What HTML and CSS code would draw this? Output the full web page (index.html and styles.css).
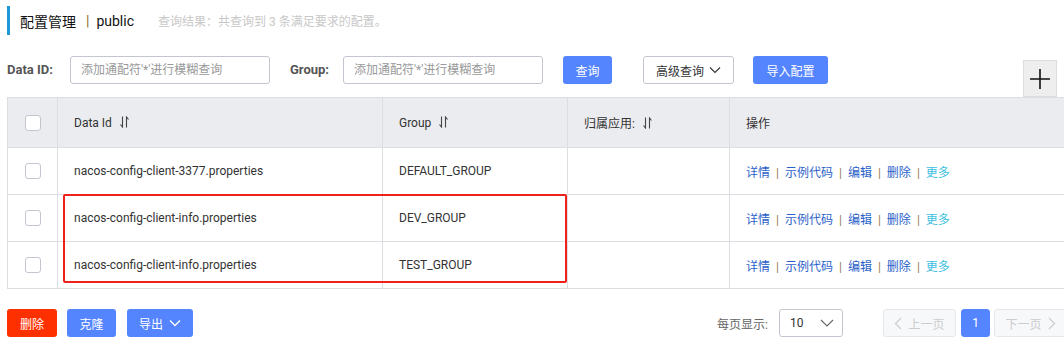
FILE: index.html
```html
<!DOCTYPE html>
<html lang="zh-CN">
<head>
    <meta charset="UTF-8">
    <title>配置管理 - public</title>
    <link rel="stylesheet" href="styles.css">
</head>
<body>
    <div class="page">
        <div class="title-bar">
            <span class="title">配置管理</span>
            <span class="title-sep">|</span>
            <span class="title-ns">public</span>
            <span class="query-result">查询结果：共查询到 3 条满足要求的配置。</span>
        </div>

        <div class="filter-row">
            <label class="filter-label data-label">Data ID:</label>
            <input class="filter-input" type="text" placeholder="添加通配符'*'进行模糊查询">
            <label class="filter-label group-label">Group:</label>
            <input class="filter-input" type="text" placeholder="添加通配符'*'进行模糊查询">
            <button class="btn btn-primary btn-search">查询</button>
            <button class="btn btn-normal btn-advanced">高级查询
                <svg class="chevron" width="12" height="8" viewBox="0 0 12 8"><path d="M1 1.5 L6 6.5 L11 1.5" fill="none" stroke="#333" stroke-width="1.1"/></svg>
            </button>
            <button class="btn btn-primary btn-import">导入配置</button>
            <div class="add-box">
                <svg width="20" height="20" viewBox="0 0 20 20"><path d="M10 0 V20 M0 10 H20" stroke="#111" stroke-width="1.6"/></svg>
            </div>
        </div>

        <div class="table-wrap">
            <table class="config-table">
                <colgroup>
                    <col style="width: 50px">
                    <col style="width: 325px">
                    <col style="width: 185px">
                    <col style="width: 162px">
                    <col>
                </colgroup>
                <thead>
                    <tr>
                        <th class="check-cell"><span class="checkbox"></span></th>
                        <th>Data Id <svg class="sort" width="9" height="12" viewBox="0 0 9 12"><path d="M2.5 0.5 V11 L0.5 8.5 M6.5 11.5 V1 L8.5 3.5" fill="none" stroke="#444" stroke-width="1.1"/></svg></th>
                        <th>Group <svg class="sort" width="9" height="12" viewBox="0 0 9 12"><path d="M2.5 0.5 V11 L0.5 8.5 M6.5 11.5 V1 L8.5 3.5" fill="none" stroke="#444" stroke-width="1.1"/></svg></th>
                        <th>归属应用: <svg class="sort" width="9" height="12" viewBox="0 0 9 12"><path d="M2.5 0.5 V11 L0.5 8.5 M6.5 11.5 V1 L8.5 3.5" fill="none" stroke="#444" stroke-width="1.1"/></svg></th>
                        <th>操作</th>
                    </tr>
                </thead>
                <tbody>
                    <tr>
                        <td class="check-cell"><span class="checkbox"></span></td>
                        <td>nacos-config-client-3377.properties</td>
                        <td>DEFAULT_GROUP</td>
                        <td></td>
                        <td class="ops"><a>详情</a><span class="sep">|</span><a>示例代码</a><span class="sep">|</span><a>编辑</a><span class="sep">|</span><a>删除</a><span class="sep">|</span><a class="more">更多</a></td>
                    </tr>
                    <tr>
                        <td class="check-cell"><span class="checkbox"></span></td>
                        <td>nacos-config-client-info.properties</td>
                        <td>DEV_GROUP</td>
                        <td></td>
                        <td class="ops"><a>详情</a><span class="sep">|</span><a>示例代码</a><span class="sep">|</span><a>编辑</a><span class="sep">|</span><a>删除</a><span class="sep">|</span><a class="more">更多</a></td>
                    </tr>
                    <tr>
                        <td class="check-cell"><span class="checkbox"></span></td>
                        <td>nacos-config-client-info.properties</td>
                        <td>TEST_GROUP</td>
                        <td></td>
                        <td class="ops"><a>详情</a><span class="sep">|</span><a>示例代码</a><span class="sep">|</span><a>编辑</a><span class="sep">|</span><a>删除</a><span class="sep">|</span><a class="more">更多</a></td>
                    </tr>
                </tbody>
            </table>
            <div class="highlight-box"></div>
        </div>

        <div class="footer-bar">
            <div class="batch-actions">
                <button class="btn btn-danger btn-delete">删除</button>
                <button class="btn btn-primary btn-clone">克隆</button>
                <button class="btn btn-primary btn-export">导出
                    <svg class="chevron" width="12" height="8" viewBox="0 0 12 8"><path d="M1 1.5 L6 6.5 L11 1.5" fill="none" stroke="#fff" stroke-width="1.3"/></svg>
                </button>
            </div>
            <div class="pager">
                <span class="page-size-label">每页显示:</span>
                <div class="page-size">
                    <span>10</span>
                    <svg width="14" height="8" viewBox="0 0 14 8"><path d="M1 1 L7 7 L13 1" fill="none" stroke="#666" stroke-width="1.1"/></svg>
                </div>
                <button class="page-btn disabled">
                    <svg width="8" height="13" viewBox="0 0 8 13"><path d="M7 1 L1.5 6.5 L7 12" fill="none" stroke="#ccc" stroke-width="1.2"/></svg>
                    上一页
                </button>
                <button class="page-btn current">1</button>
                <button class="page-btn disabled">下一页
                    <svg width="8" height="13" viewBox="0 0 8 13"><path d="M1 1 L6.5 6.5 L1 12" fill="none" stroke="#ccc" stroke-width="1.2"/></svg>
                </button>
            </div>
        </div>
    </div>
</body>
</html>
```

FILE: styles.css
```css
html, body {
    margin: 0;
    padding: 0;
    overflow: hidden;
    background: #fff;
}

body {
    font-family: Roboto, "Noto Sans CJK SC", sans-serif;
    font-size: 12px;
    color: #333;
}

.page {
    width: 1060px;
    padding: 6px 0 0 7px;
}

/* title */
.title-bar {
    display: flex;
    align-items: center;
    height: 29px;
    border-left: 3px solid #1d9ad6;
    padding-left: 10px;
}

.title {
    font-size: 14px;
    color: #111;
}

.title-sep {
    font-size: 14px;
    color: #8a6d2a;
    margin: 0 7px 0 10px;
}

.title-ns {
    font-size: 14px;
    color: #111;
}

.query-result {
    margin-left: 24px;
    color: #c8c8c8;
    font-size: 12px;
}

/* filter row */
.filter-row {
    display: flex;
    align-items: flex-start;
    margin-top: 21px;
    height: 41px;
}

.filter-label {
    font-size: 13px;
    font-weight: bold;
    color: #555;
    line-height: 28px;
    margin-right: 12px;
}

.data-label {
    width: 51px;
}

.group-label {
    width: 41px;
    margin-left: 20px;
}

.filter-input {
    box-sizing: border-box;
    width: 200px;
    height: 28px;
    padding: 0 10px;
    border: 1px solid #c4c6cf;
    border-radius: 3px;
    font-family: inherit;
    font-size: 12px;
    outline: none;
}

.filter-input::placeholder {
    color: #999;
}

.btn {
    box-sizing: border-box;
    height: 28px;
    border: 1px solid transparent;
    border-radius: 3px;
    font-family: inherit;
    font-size: 12px;
    padding: 0;
    display: inline-flex;
    align-items: center;
    justify-content: center;
    gap: 5px;
}

.btn-primary {
    background: #5584ff;
    color: #fff;
}

.btn-danger {
    background: #ff3000;
    color: #fff;
}

.btn-normal {
    background: #fff;
    border-color: #c4c6cf;
    color: #333;
}

.btn-search {
    width: 49px;
    margin-left: 20px;
}

.btn-advanced {
    width: 91px;
    margin-left: 31px;
}

.btn-import {
    width: 75px;
    margin-left: 19px;
}

.add-box {
    box-sizing: border-box;
    width: 34px;
    height: 37px;
    margin: 4px 10px 0 auto;
    background: #eee;
    border: 1px solid #ddd;
    display: flex;
    align-items: center;
    justify-content: center;
}

/* table */
.table-wrap {
    position: relative;
}

.config-table {
    width: 100%;
    border-collapse: collapse;
    table-layout: fixed;
}

.config-table th,
.config-table td {
    border: 1px solid #dcdee3;
    padding: 0 16px;
    text-align: left;
    font-weight: normal;
    color: #333;
    white-space: nowrap;
}

.config-table th {
    background: #ebecf0;
    height: 49px;
}

.config-table td {
    height: 46px;
}

.config-table .check-cell {
    padding: 0;
    text-align: center;
    border-left: 1px solid #dcdee3;
}

.checkbox {
    display: inline-block;
    box-sizing: border-box;
    width: 16px;
    height: 16px;
    border: 1px solid #c4c6cf;
    border-radius: 3px;
    background: #fff;
    vertical-align: middle;
}

.sort {
    vertical-align: -1px;
    margin-left: 5px;
}

.ops a {
    color: #2a62c9;
}

.ops a.more {
    color: #3cc0e0;
}

.ops .sep {
    color: #9a7b55;
    margin: 0 6px;
}

.highlight-box {
    position: absolute;
    left: 56px;
    top: 97px;
    width: 504px;
    height: 89px;
    border: 2px solid #f0211b;
    border-radius: 2px;
    box-sizing: border-box;
}

/* footer */
.footer-bar {
    display: flex;
    align-items: center;
    margin-top: 20px;
}

.batch-actions {
    display: flex;
}

.btn-delete {
    width: 50px;
}

.btn-clone {
    width: 49px;
    margin-left: 10px;
}

.btn-export {
    width: 66px;
    margin-left: 11px;
    gap: 6px;
}

.pager {
    display: flex;
    align-items: center;
    margin-left: auto;
}

.page-size-label {
    color: #666;
    margin-right: 11px;
}

.page-size {
    box-sizing: border-box;
    width: 64px;
    height: 28px;
    border: 1px solid #c4c6cf;
    border-radius: 3px;
    display: flex;
    align-items: center;
    justify-content: space-between;
    padding: 0 8px 0 10px;
    margin-right: 40px;
    color: #333;
}

.page-btn {
    box-sizing: border-box;
    height: 28px;
    border-radius: 3px;
    font-family: inherit;
    font-size: 12px;
    display: inline-flex;
    align-items: center;
    justify-content: center;
    gap: 6px;
    padding: 0;
}

.page-btn.disabled {
    width: 73px;
    background: #f7f8fa;
    border: 1px solid #e6e7eb;
    color: #ccc;
}

.page-btn.current {
    width: 29px;
    margin: 0 4px 0 5px;
    background: #5584ff;
    border: 1px solid #5584ff;
    color: #fff;
}
```
